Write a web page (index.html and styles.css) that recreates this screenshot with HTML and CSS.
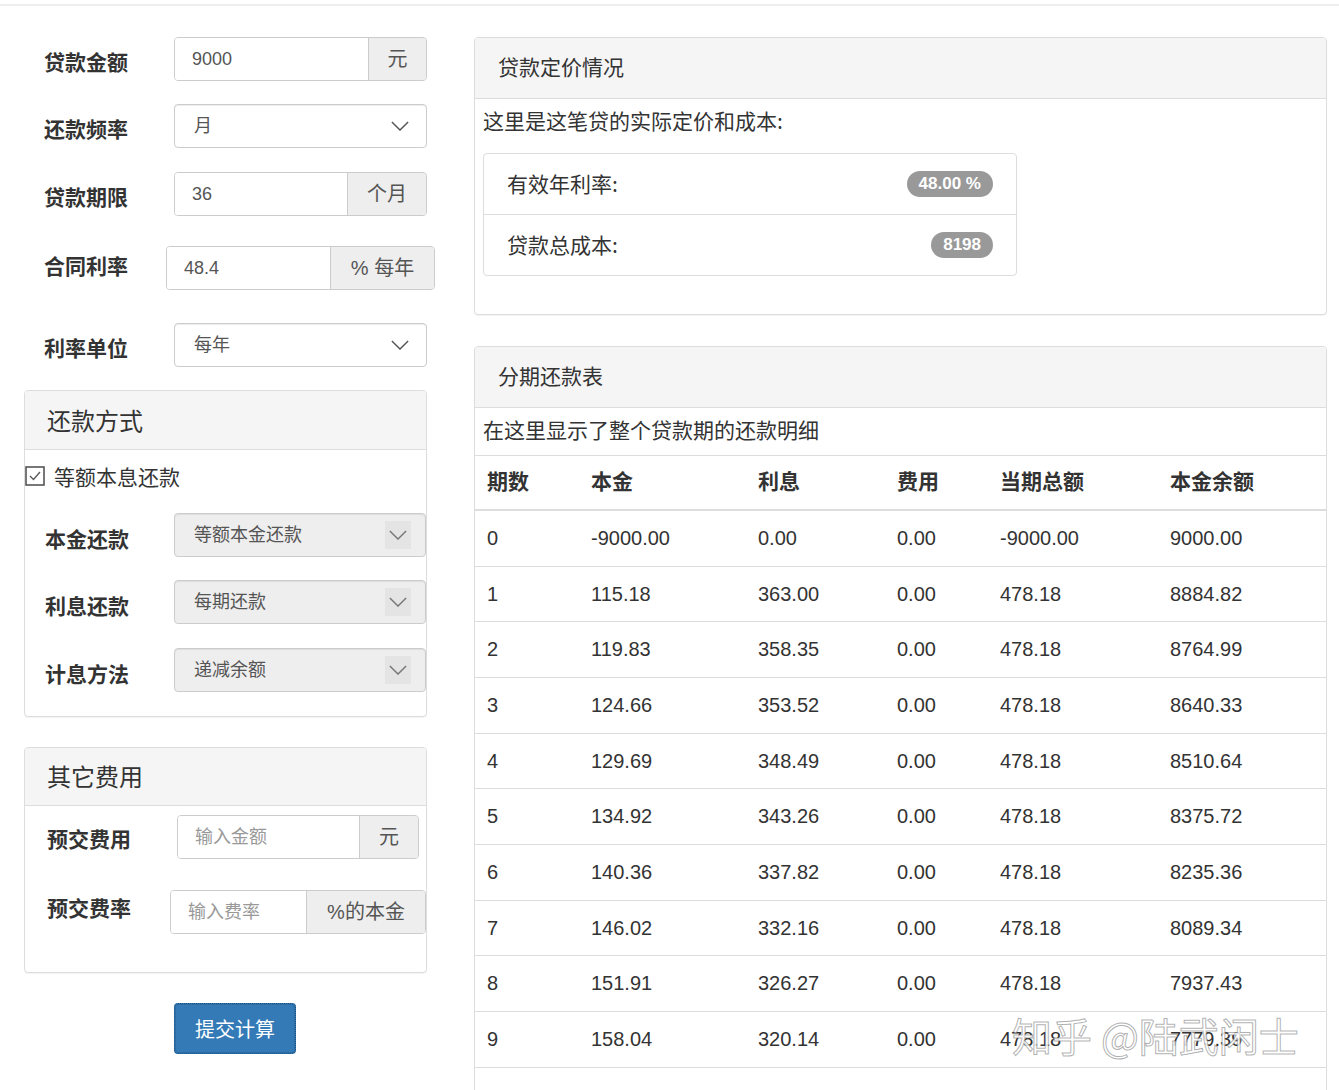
FILE: index.html
```html
<!DOCTYPE html>
<html lang="zh-CN">
<head>
<meta charset="utf-8">
<title>贷款计算</title>
<link rel="stylesheet" href="styles.css">
</head>
<body>
<div class="topline"></div>
<div class="page">
  <div class="left">
    <div class="frow r1">
      <div class="flabel">贷款金额</div>
      <div class="igroup">
        <div class="ifield">9000</div>
        <div class="addon w58">元</div>
      </div>
    </div>
    <div class="frow r2">
      <div class="flabel">还款频率</div>
      <div class="sel"><span>月</span><svg class="chev" viewBox="0 0 20 11"><path d="M1 1 L10 10 L19 1"/></svg></div>
    </div>
    <div class="frow r3">
      <div class="flabel">贷款期限</div>
      <div class="igroup">
        <div class="ifield">36</div>
        <div class="addon w79">个月</div>
      </div>
    </div>
    <div class="frow r4">
      <div class="flabel up">合同利率</div>
      <div class="igroup wide">
        <div class="ifield">48.4</div>
        <div class="addon w104">% 每年</div>
      </div>
    </div>
    <div class="frow r5">
      <div class="flabel">利率单位</div>
      <div class="sel"><span>每年</span><svg class="chev" viewBox="0 0 20 11"><path d="M1 1 L10 10 L19 1"/></svg></div>
    </div>

    <div class="panel p-repay">
      <div class="phead big">还款方式</div>
      <div class="pbody-l">
        <div class="check">
          <svg class="cbox" viewBox="0 0 20 20"><rect x="1" y="1" width="18" height="18" fill="#fff" stroke="#555" stroke-width="1.6"/><path d="M5 10 L8.5 13.5 L15 6" fill="none" stroke="#555" stroke-width="1.3"/></svg>
          <span>等额本息还款</span>
        </div>
        <div class="srow s1">
          <div class="slabel">本金还款</div>
          <div class="sel dis"><span>等额本金还款</span><span class="chbox"><svg class="chev" viewBox="0 0 20 11"><path d="M1 1 L10 10 L19 1"/></svg></span></div>
        </div>
        <div class="srow s2">
          <div class="slabel">利息还款</div>
          <div class="sel dis"><span>每期还款</span><span class="chbox"><svg class="chev" viewBox="0 0 20 11"><path d="M1 1 L10 10 L19 1"/></svg></span></div>
        </div>
        <div class="srow s3">
          <div class="slabel">计息方法</div>
          <div class="sel dis"><span>递减余额</span><span class="chbox"><svg class="chev" viewBox="0 0 20 11"><path d="M1 1 L10 10 L19 1"/></svg></span></div>
        </div>
      </div>
    </div>

    <div class="panel p-fee">
      <div class="phead big">其它费用</div>
      <div class="pbody-f">
        <div class="feerow f1">
          <div class="felabel">预交费用</div>
          <div class="igroup fee1">
            <div class="ifield ph">输入金额</div>
            <div class="addon w59">元</div>
          </div>
        </div>
        <div class="feerow f2">
          <div class="felabel">预交费率</div>
          <div class="igroup fee2">
            <div class="ifield ph">输入费率</div>
            <div class="addon w119">%的本金</div>
          </div>
        </div>
      </div>
    </div>

    <div class="btnrow"><button class="btn">提交计算</button></div>
  </div>

  <div class="right">
    <div class="panel rp1">
      <div class="phead">贷款定价情况</div>
      <div class="rbody">
        <div class="intro">这里是这笔贷的实际定价和成本:</div>
        <div class="lgroup">
          <div class="litem"><span>有效年利率:</span><span class="badge">48.00 %</span></div>
          <div class="litem"><span>贷款总成本:</span><span class="badge">8198</span></div>
        </div>
      </div>
    </div>

    <div class="panel rp2">
      <div class="phead">分期还款表</div>
      <div class="intro2">在这里显示了整个贷款期的还款明细</div>
      <table class="tbl">
        <colgroup>
          <col class="c1"><col class="c2"><col class="c3"><col class="c4"><col class="c5"><col class="c6">
        </colgroup>
        <thead>
          <tr><th>期数</th><th>本金</th><th>利息</th><th>费用</th><th>当期总额</th><th>本金余额</th></tr>
        </thead>
        <tbody>
          <tr><td>0</td><td>-9000.00</td><td>0.00</td><td>0.00</td><td>-9000.00</td><td>9000.00</td></tr>
          <tr><td>1</td><td>115.18</td><td>363.00</td><td>0.00</td><td>478.18</td><td>8884.82</td></tr>
          <tr><td>2</td><td>119.83</td><td>358.35</td><td>0.00</td><td>478.18</td><td>8764.99</td></tr>
          <tr><td>3</td><td>124.66</td><td>353.52</td><td>0.00</td><td>478.18</td><td>8640.33</td></tr>
          <tr><td>4</td><td>129.69</td><td>348.49</td><td>0.00</td><td>478.18</td><td>8510.64</td></tr>
          <tr><td>5</td><td>134.92</td><td>343.26</td><td>0.00</td><td>478.18</td><td>8375.72</td></tr>
          <tr><td>6</td><td>140.36</td><td>337.82</td><td>0.00</td><td>478.18</td><td>8235.36</td></tr>
          <tr><td>7</td><td>146.02</td><td>332.16</td><td>0.00</td><td>478.18</td><td>8089.34</td></tr>
          <tr><td>8</td><td>151.91</td><td>326.27</td><td>0.00</td><td>478.18</td><td>7937.43</td></tr>
          <tr><td>9</td><td>158.04</td><td>320.14</td><td>0.00</td><td>478.18</td><td>7779.39</td></tr>
        </tbody>
      </table>
    </div>
  </div>
</div>
<div class="watermark">知乎 @陆武闲士</div>
</body>
</html>
```
FILE: styles.css
```css
html, body {
  margin: 0;
  padding: 0;
  height: 1090px;
  overflow: hidden;
  background: #fff;
}
body {
  font-family: "Liberation Sans", "Noto Sans CJK SC", sans-serif;
  color: #333;
  position: relative;
}
.topline {
  margin-top: 4px;
  height: 2px;
  background: #eeeeee;
}
.page {
  display: flex;
  padding-top: 31px;
}
.left {
  width: 411px;
  padding-left: 24px;
  flex: none;
}
.right {
  margin-left: 39px;
  width: 853px;
  flex: none;
}

/* form rows */
.frow {
  display: flex;
  align-items: center;
  height: 44px;
}
.r2 { margin-top: 23px; }
.r3 { margin-top: 24px; }
.r4 { margin-top: 30px; }
.r5 { margin-top: 33px; }
.flabel {
  width: 150px;
  box-sizing: border-box;
  padding-left: 20px;
  font-size: 21px;
  font-weight: bold;
  line-height: 30px;
  margin-top: 3px;
  font-family: "Noto Sans CJK SC", sans-serif;
}
.flabel.up {
  margin-top: 0;
  margin-bottom: 6px;
  width: 142px;
}

.igroup {
  display: flex;
  width: 253px;
  height: 44px;
  box-sizing: border-box;
  border: 1px solid #ccc;
  border-radius: 4px;
  overflow: hidden;
  box-shadow: inset 0 1px 1px rgba(0,0,0,.075);
}
.igroup.wide { width: 269px; }
.ifield {
  flex: 1;
  padding-left: 17px;
  font-size: 18px;
  line-height: 42px;
  color: #555;
  background: #fff;
}
.ifield.ph {
  color: #999;
  font-size: 18px;
}
.addon {
  flex: none;
  box-sizing: border-box;
  background: #eee;
  border-left: 1px solid #ccc;
  text-align: center;
  font-size: 20px;
  line-height: 42px;
  color: #555;
}
.w58 { width: 58px; }
.w59 { width: 59px; }
.w79 { width: 79px; }
.w104 { width: 104px; }
.w119 { width: 119px; }

.sel {
  display: flex;
  align-items: center;
  justify-content: space-between;
  width: 253px;
  height: 44px;
  box-sizing: border-box;
  border: 1px solid #ccc;
  border-radius: 4px;
  padding: 0 17px 0 19px;
  font-size: 18px;
  color: #555;
  background: #fff;
  box-shadow: inset 0 1px 1px rgba(0,0,0,.075);
}
.sel span:first-child {
  margin-top: -4px;
}
.chev {
  width: 18px;
  height: 10px;
  fill: none;
  stroke: #555;
  stroke-width: 1.6;
}
.sel.dis {
  background: #eee;
  width: 252px;
  padding-right: 14px;
  color: #555;
}
.chbox {
  display: flex;
  align-items: center;
  justify-content: center;
  width: 26px;
  height: 28px;
  background: #e4e4e4;
}
.chbox .chev { stroke: #777; }

/* panels */
.panel {
  border: 1px solid #ddd;
  border-radius: 4px;
  box-shadow: 0 1px 1px rgba(0,0,0,.05);
  background: #fff;
}
.phead {
  background: #f5f5f5;
  border-bottom: 1px solid #ddd;
  border-radius: 3px 3px 0 0;
  height: 60px;
  box-sizing: border-box;
  padding-left: 23px;
  font-size: 21px;
  line-height: 60px;
  color: #333;
  font-family: "Noto Sans CJK SC", sans-serif;
}
.phead.big {
  font-size: 24px;
  padding-left: 22px;
  height: 59px;
  line-height: 58px;
}

.p-repay {
  margin-top: 23px;
  width: 403px;
  box-sizing: border-box;
  height: 327px;
}
.check {
  display: flex;
  align-items: center;
  height: 26px;
  margin-top: 13px;
  font-size: 21px;
  font-family: "Noto Sans CJK SC", sans-serif;
  color: #333;
}
.cbox {
  width: 20px;
  height: 20px;
  margin-right: 9px;
}
.srow {
  display: flex;
  align-items: center;
  height: 44px;
}
.s1 { margin-top: 24px; }
.s2 { margin-top: 23px; }
.s3 { margin-top: 24px; }
.slabel {
  width: 149px;
  box-sizing: border-box;
  padding-left: 20px;
  font-size: 21px;
  font-weight: bold;
  font-family: "Noto Sans CJK SC", sans-serif;
  margin-top: 6px;
}

.p-fee {
  margin-top: 30px;
  width: 403px;
  box-sizing: border-box;
  height: 226px;
}
.p-fee .phead.big { height: 58px; line-height: 56px; }
.feerow {
  display: flex;
  align-items: center;
  height: 44px;
}
.f1 { margin-top: 9px; }
.f2 { margin-top: 31px; }
.felabel {
  box-sizing: border-box;
  padding-left: 22px;
  font-size: 21px;
  font-weight: bold;
  font-family: "Noto Sans CJK SC", sans-serif;
}
.f1 .felabel { width: 152px; margin-top: 2px; }
.f2 .felabel { width: 145px; margin-top: -10px; }
.igroup.fee1 { width: 242px; height: 44px; }
.igroup.fee2 { width: 256px; }

.btnrow {
  padding-left: 150px;
  margin-top: 30px;
}
.btn {
  width: 122px;
  height: 51px;
  background: #337ab7;
  border: 1px dotted #1c4f7e;
  border-radius: 4px;
  color: #fff;
  font-size: 20px;
  font-family: "Noto Sans CJK SC", sans-serif;
  padding: 0;
  box-shadow: inset 0 0 0 1px #2e6da4;
}

/* right side */
.rp1 {
  height: 278px;
  box-sizing: border-box;
}
.rp1 .phead { height: 61px; line-height: 57px; }
.rbody {
  padding: 6px 8px 0 8px;
}
.intro {
  font-size: 21px;
  line-height: 30px;
  font-family: "Noto Sans CJK SC", sans-serif;
}
.lgroup {
  margin-top: 18px;
  width: 534px;
  border: 1px solid #ddd;
  border-radius: 4px;
  box-sizing: border-box;
}
.litem {
  display: flex;
  align-items: center;
  justify-content: space-between;
  height: 60px;
  padding: 0 23px 0 23px;
  font-size: 21px;
  font-family: "Noto Sans CJK SC", sans-serif;
}
.litem span:first-child { margin-top: -3px; }
.litem + .litem { border-top: 1px solid #ddd; }
.badge {
  display: inline-block;
  background: #999;
  color: #fff;
  font-family: "Liberation Sans", sans-serif;
  font-weight: bold;
  font-size: 17px;
  height: 26px;
  line-height: 26px;
  border-radius: 13px;
  padding: 0 12px;
}

.rp2 {
  margin-top: 31px;
  height: 760px;
}
.rp2 .phead { height: 61px; line-height: 57px; }
.intro2 {
  padding: 6px 8px 0 8px;
  height: 41px;
  font-size: 21px;
  line-height: 30px;
  font-family: "Noto Sans CJK SC", sans-serif;
}
.tbl {
  width: 100%;
  border-collapse: collapse;
  table-layout: fixed;
  border-top: 1px solid #ddd;
  border-bottom: 1px solid #ddd;
}
.c1 { width: 104px; }
.c2 { width: 167px; }
.c3 { width: 139px; }
.c4 { width: 103px; }
.c5 { width: 170px; }
.c6 { width: auto; }
.tbl th {
  text-align: left;
  font-size: 21px;
  font-weight: bold;
  font-family: "Noto Sans CJK SC", sans-serif;
  padding: 10px 12px 14px 12px;
  line-height: 29px;
  border-bottom: 2px solid #ddd;
  color: #333;
}
.tbl td {
  font-size: 20px;
  padding: 13px 12px;
  line-height: 28.67px;
  border-top: 1px solid #ddd;
  color: #333;
}
.tbl tbody tr:first-child td { border-top: 0; }

.watermark {
  position: absolute;
  left: 1012px;
  top: 1010px;
  font-size: 40px;
  line-height: 50px;
  font-family: "Noto Sans CJK SC", sans-serif;
  color: rgba(255,255,255,0.85);
  -webkit-text-stroke: 1px rgba(110,110,110,0.55);
  white-space: nowrap;
}
```
